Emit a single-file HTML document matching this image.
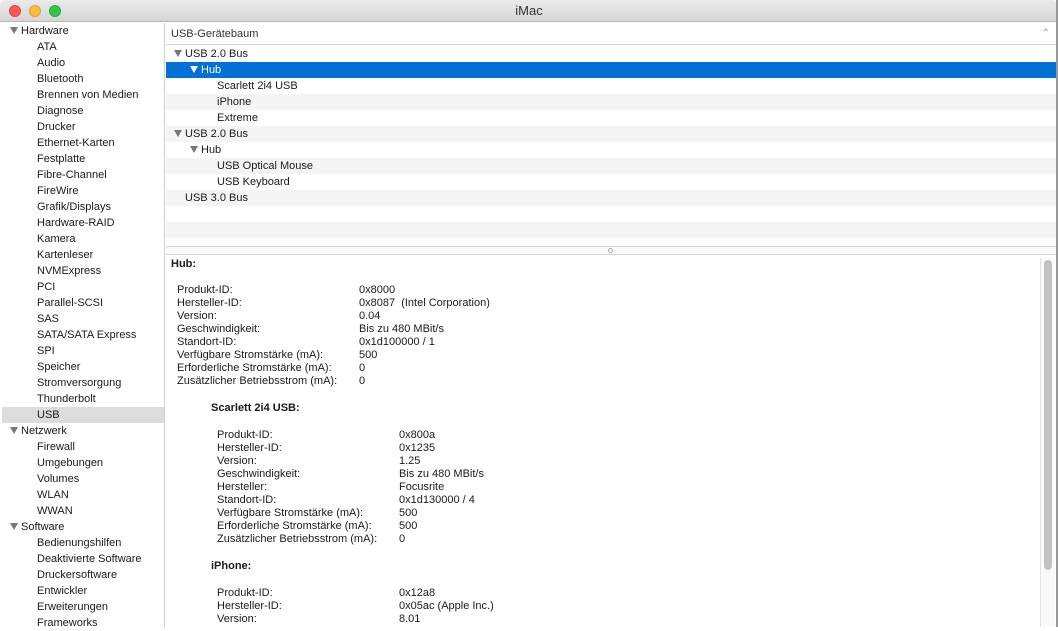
<!DOCTYPE html>
<html><head><meta charset="utf-8"><style>
*{margin:0;padding:0;box-sizing:border-box}
body{width:1058px;height:627px;overflow:hidden;background:#fff;font-family:"Liberation Sans",sans-serif;font-size:11px;color:#1a1a1a;position:relative}
.tb{position:absolute;left:0;top:0;width:1058px;height:22px;background:linear-gradient(#ebebeb,#d5d5d5);border-bottom:1px solid #b8b8b8;text-align:center;line-height:22px;font-size:13px;color:#333;border-radius:5px 5px 0 0}
.dot{position:absolute;top:5px;width:12px;height:12px;border-radius:50%}
.side{position:absolute;left:2px;top:23px;width:163px;height:604px;background:#fff;border-right:1px solid #d0d0d0}
.side div{height:16px;line-height:16px;white-space:nowrap}
.side .h{padding-left:8px}
.side .i{padding-left:35px}
.side .sel{background:#dcdcdc}
.tri{display:inline-block;width:0;height:0;border-left:4px solid transparent;border-right:4px solid transparent;border-top:7px solid #777;margin-right:3px;vertical-align:0}
.hdr{position:absolute;left:166px;top:23px;width:890px;height:22px;border-bottom:1px solid #d4d4d4;line-height:22px;padding-left:5px;color:#333}
.tree{position:absolute;left:166px;top:46px;width:890px}
.tree div{height:16px;line-height:16px;white-space:nowrap}
.tree .g{background:#f4f4f4}
.tree .s{background:#0070d4;color:#fff}
.tree .s .tri{border-top-color:#fff}
.div{position:absolute;left:166px;top:246px;width:890px;height:9px;border-top:1px solid #d4d4d4;border-bottom:1px solid #d4d4d4;background:#fafafa}
.det{position:absolute;left:166px;top:256px;width:890px;height:371px}
.t{position:absolute;white-space:nowrap;line-height:13px}
.b{font-weight:bold}
</style></head><body>
<div class="tb">iMac
<div class="dot" style="left:9px;background:#fc5753;border:1px solid #df4744"></div>
<div class="dot" style="left:29px;background:#fdbc40;border:1px solid #de9f34"></div>
<div class="dot" style="left:49px;background:#33c748;border:1px solid #27aa35"></div>
</div>
<div class="side">
<div class="h"><span class="tri"></span>Hardware</div>
<div class="i">ATA</div><div class="i">Audio</div><div class="i">Bluetooth</div><div class="i">Brennen von Medien</div><div class="i">Diagnose</div><div class="i">Drucker</div><div class="i">Ethernet-Karten</div><div class="i">Festplatte</div><div class="i">Fibre-Channel</div><div class="i">FireWire</div><div class="i">Grafik/Displays</div><div class="i">Hardware-RAID</div><div class="i">Kamera</div><div class="i">Kartenleser</div><div class="i">NVMExpress</div><div class="i">PCI</div><div class="i">Parallel-SCSI</div><div class="i">SAS</div><div class="i">SATA/SATA Express</div><div class="i">SPI</div><div class="i">Speicher</div><div class="i">Stromversorgung</div><div class="i">Thunderbolt</div><div class="i sel">USB</div>
<div class="h"><span class="tri"></span>Netzwerk</div>
<div class="i">Firewall</div><div class="i">Umgebungen</div><div class="i">Volumes</div><div class="i">WLAN</div><div class="i">WWAN</div>
<div class="h"><span class="tri"></span>Software</div>
<div class="i">Bedienungshilfen</div><div class="i">Deaktivierte Software</div><div class="i">Druckersoftware</div><div class="i">Entwickler</div><div class="i">Erweiterungen</div><div class="i">Frameworks</div>
</div>
<div class="hdr">USB-Gerätebaum<span style="position:absolute;right:6px;top:0;color:#999;font-size:10px">&#8963;</span></div>
<div class="tree">
<div style="padding-left:8px"><span class="tri"></span>USB 2.0 Bus</div>
<div class="s" style="padding-left:24px"><span class="tri"></span>Hub</div>
<div style="padding-left:51px">Scarlett 2i4 USB</div>
<div class="g" style="padding-left:51px">iPhone</div>
<div style="padding-left:51px">Extreme</div>
<div class="g" style="padding-left:8px"><span class="tri"></span>USB 2.0 Bus</div>
<div style="padding-left:24px"><span class="tri"></span>Hub</div>
<div class="g" style="padding-left:51px">USB Optical Mouse</div>
<div style="padding-left:51px">USB Keyboard</div>
<div class="g" style="padding-left:19px">USB 3.0 Bus</div>
<div></div><div class="g"></div>
</div>
<div class="div"><div style="position:absolute;left:442px;top:1px;width:5px;height:5px;border-radius:50%;border:1px solid #aaa"></div></div>
<div class="det">
<div class="t b" style="left:5px;top:2px">Hub:</div>
<div class="t" style="left:11px;top:28px">Produkt-ID:<br>Hersteller-ID:<br>Version:<br>Geschwindigkeit:<br>Standort-ID:<br>Verfügbare Stromstärke (mA):<br>Erforderliche Stromstärke (mA):<br>Zusätzlicher Betriebsstrom (mA):</div>
<div class="t" style="left:193px;top:28px">0x8000<br>0x8087&nbsp; (Intel Corporation)<br>0.04<br>Bis zu 480 MBit/s<br>0x1d100000 / 1<br>500<br>0<br>0</div>
<div class="t b" style="left:45px;top:146px">Scarlett 2i4 USB:</div>
<div class="t" style="left:51px;top:173px">Produkt-ID:<br>Hersteller-ID:<br>Version:<br>Geschwindigkeit:<br>Hersteller:<br>Standort-ID:<br>Verfügbare Stromstärke (mA):<br>Erforderliche Stromstärke (mA):<br>Zusätzlicher Betriebsstrom (mA):</div>
<div class="t" style="left:233px;top:173px">0x800a<br>0x1235<br>1.25<br>Bis zu 480 MBit/s<br>Focusrite<br>0x1d130000 / 4<br>500<br>500<br>0</div>
<div class="t b" style="left:45px;top:304px">iPhone:</div>
<div class="t" style="left:51px;top:331px">Produkt-ID:<br>Hersteller-ID:<br>Version:</div>
<div class="t" style="left:233px;top:331px">0x12a8<br>0x05ac (Apple Inc.)<br>8.01</div>
<div style="position:absolute;left:874px;top:2px;width:15px;height:369px;border-left:1px solid #e2e2e2;background:#fafafa"><div style="position:absolute;left:3px;top:2px;width:8px;height:310px;border-radius:4px;background:#c2c2c2"></div></div>
</div>
<div style="position:absolute;left:1056px;top:0;width:2px;height:627px;background:#999"></div>
</body></html>
